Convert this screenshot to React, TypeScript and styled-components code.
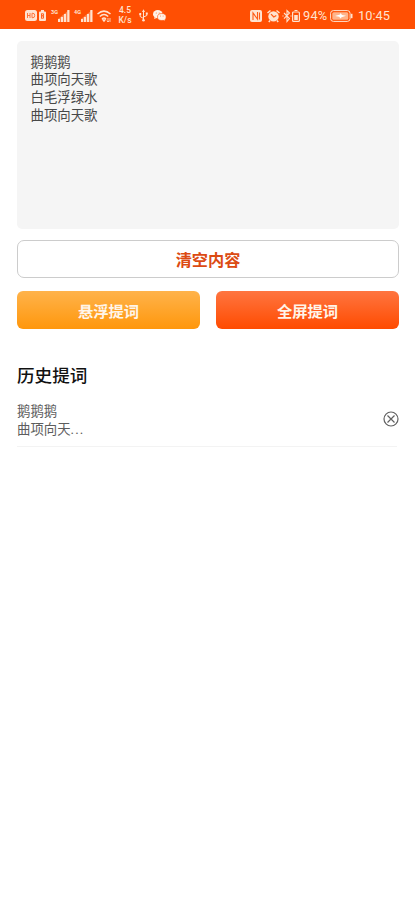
import React from 'react';
import styled, { createGlobalStyle } from 'styled-components';

const GlobalStyle = createGlobalStyle`
  * { box-sizing: border-box; }
  body { margin: 0; background: #fff; font-family: Roboto, "Noto Sans CJK SC", sans-serif; }
  button { font-family: inherit; border: 0; padding: 0; margin: 0; cursor: pointer; }
`;

const Screen = styled.div`
  min-height: 900px;
  background: #fff;
`;

const StatusBar = styled.header`
  display: flex;
  justify-content: space-between;
  height: 29px;
  padding: 2px 25px 0;
  background: #ff4f03;
  color: #ffe3d0;
`;

const StatusGroup = styled.div`
  display: flex;
  align-items: center;
`;

const Glyph = styled.svg<{ $gap?: number }>`
  display: block;
  flex: none;
  margin-left: ${(p) => p.$gap ?? 0}px;
  overflow: visible;
`;

const NetLabel = styled.span<{ $gap: number }>`
  width: 7px;
  margin: 0 0 7px ${(p) => p.$gap}px;
  font-size: 5.5px;
  line-height: 6px;
  font-weight: 700;
`;

const Speed = styled.span`
  width: 20px;
  margin-left: 4px;
  text-align: center;
  font-size: 8.5px;
  line-height: 9.5px;
  font-weight: 500;
`;

const Percent = styled.span`
  width: 27px;
  margin-left: 3px;
  font-size: 12.8px;
  letter-spacing: 0.2px;
`;

const Clock = styled.span`
  width: 32px;
  margin-left: 5px;
  font-size: 12.8px;
  white-space: nowrap;
`;

const Content = styled.main`
  padding: 12px 16px 0 17px;
`;

const ScriptPanel = styled.section`
  height: 188px;
  padding: 12.5px 13.5px;
  border-radius: 5px;
  background: #f5f5f5;
`;

const Verse = styled.p<{ $muted?: boolean }>`
  margin: 0;
  font-size: 13.4px;
  line-height: 17.7px;
  white-space: pre-line;
  color: ${(p) => (p.$muted ? '#5d5d5d' : '#484848')};
`;

const Ellipsis = styled.span`
  letter-spacing: 1.1px;
`;

const ClearButton = styled.button`
  display: block;
  width: 100%;
  height: 38px;
  margin-top: 11px;
  border: 1px solid #ccc;
  border-radius: 7px;
  background: #fff;
  color: #dc4b13;
  font-size: 16.2px;
  font-weight: 700;
`;

const Actions = styled.div`
  display: grid;
  grid-template-columns: 1fr 1fr;
  gap: 16px;
  margin-top: 13px;
`;

const ActionButton = styled.button<{ $from: string; $to: string }>`
  height: 38px;
  border-radius: 6px;
  background: linear-gradient(${(p) => p.$from}, ${(p) => p.$to});
  color: #fff5e9;
  font-size: 15.3px;
  font-weight: 700;
`;

const Heading = styled.h2`
  margin: 34px 0 0;
  font-size: 17.6px;
  line-height: 26px;
  font-weight: 500;
  color: #111;
`;

const HistoryItem = styled.article`
  display: flex;
  justify-content: space-between;
  align-items: flex-start;
  height: 44px;
  margin: 14px 2px 0 0;
  border-bottom: 1px solid #f3f3f3;
`;

const RemoveButton = styled.button`
  margin: 8px -2px 0 0;
  background: none;
`;

const Signal = () => (
  <Glyph $gap={0} width="12" height="12" viewBox="0 0 12 12" fill="currentColor">
    <path d="M0 9h2v3H0zM3 7h2v5H3zM6 4h2v8H6zM9.300 0h2.200v12H9.300z" />
    <path d="M0 12V9L11 0v12z" opacity=".35" />
  </Glyph>
);

export default function App() {
  return (
    <>
      <GlobalStyle />
      <Screen>
        <StatusBar>
          <StatusGroup>
            <Glyph width="12" height="11" viewBox="0 0 12 11">
              <rect width="12" height="11" rx="2.500" fill="currentColor" />
              <path d="M2.500 3v5M5 3v5M2.500 5.500H5M7 3.300v4.400h1q1.700 0 1.700-2.200T8 3.300z" fill="none" stroke="#ff6a2b" strokeWidth=".9" />
            </Glyph>
            <Glyph $gap={2} width="7" height="11" viewBox="0 0 7 11">
              <path d="M2 0h3v1.500h1q1 0 1 1V10q0 1-1 1H1q-1 0-1-1V2.500q0-1 1-1h1z" fill="currentColor" />
              <path d="M2.500 3.500v5M2.500 3.800h2v2h-2h2v2.400h-2" fill="none" stroke="#ff6424" />
            </Glyph>
            <NetLabel $gap={5}>3G</NetLabel>
            <Signal />
            <NetLabel $gap={4}>4G</NetLabel>
            <Signal />
            <Glyph $gap={4} width="14" height="12" viewBox="0 0 14 12" fill="none" stroke="currentColor" strokeWidth="1.500">
              <path d="M.5 4Q7-1.800 13.500 4M2.800 6.500Q7 2.500 11.200 6.500M5 9q2-2 4 0" />
              <path d="M6.200 10h1.600L7 11z" fill="currentColor" />
              <path d="M11 8v4M9.800 10.700 11 12l1.200-1.300M13 12V8" strokeWidth=".8" />
            </Glyph>
            <Speed>4.5<br />K/s</Speed>
            <Glyph $gap={4} width="9" height="13" viewBox="0 0 9 13" fill="none" stroke="currentColor">
              <path d="M4.500 2v9M4.500 9.500 1.200 7.500V5M4.500 8l3.300-1.500V4" />
              <path d="M3 3 4.500.3 6 3z" fill="currentColor" stroke="none" />
              <circle cx="4.500" cy="11.300" r="1.300" fill="currentColor" stroke="none" />
              <path d="M.3 4h1.900v2H.3zM6.800 3.500h1.900v2H6.800z" fill="currentColor" stroke="none" />
            </Glyph>
            <Glyph $gap={5} width="13" height="11" viewBox="0 0 13 11">
              <ellipse cx="4.800" cy="4.200" rx="4.800" ry="4.100" fill="#fff1e7" />
              <path d="m1.500 7-.3 2 2.300-1z" fill="#fff1e7" />
              <ellipse cx="8.800" cy="7" rx="4.300" ry="3.500" fill="#fff1e7" stroke="#ff4f03" strokeWidth=".6" />
              <path d="m10 9.500 1.700 1.300-.2-2z" fill="#fff1e7" />
              <g fill="#ff7a42"><circle cx="3.300" cy="3" r=".6" /><circle cx="6.200" cy="3" r=".6" /><circle cx="7.500" cy="6" r=".5" /><circle cx="10.100" cy="6" r=".5" /></g>
            </Glyph>
          </StatusGroup>
          <StatusGroup>
            <Glyph width="12" height="12" viewBox="0 0 12 12">
              <rect width="12" height="12" rx="2" fill="currentColor" />
              <path d="M3 10V3l4.500 6V2M9.500 2.500v7" fill="none" stroke="#ff5b15" strokeWidth="1.100" />
            </Glyph>
            <Glyph $gap={5} width="13" height="12" viewBox="0 0 13 12">
              <circle cx="6.500" cy="6.400" r="5.200" fill="currentColor" />
              <path d="m.5 3 3-2.500M9.500.5l3 2.500M3 10.500 1.800 12M10 10.500l1.200 1.500" stroke="currentColor" strokeWidth="1.500" />
              <path d="M4 4.200 6.800 7l2.500-1.500" fill="none" stroke="#ff5b15" strokeWidth="1.200" />
            </Glyph>
            <Glyph $gap={3} width="8" height="12" viewBox="0 0 8 12" fill="none" stroke="currentColor" strokeWidth="1.100">
              <path d="m1 3 5.500 5.500L4 11.500V.5L6.500 3 1 8.700" />
              <path d="M0 5.400v1.200M8 5.400v1.200" />
            </Glyph>
            <Glyph $gap={1} width="8" height="12" viewBox="0 0 8 12">
              <path d="M2.500.5h3M1.500 2h5q.9 0 .9.900v7.600q0 .9-.9.900h-5q-.9 0-.9-.9V2.900q0-.9.9-.9z" fill="none" stroke="currentColor" strokeWidth="1.200" />
              <path d="M2.200 5h3.600v5H2.200z" fill="currentColor" />
            </Glyph>
            <Percent>94%</Percent>
            <Glyph width="23" height="12" viewBox="0 0 23 12">
              <rect x=".6" y=".6" width="19.500" height="10.800" rx="2.800" fill="none" stroke="currentColor" />
              <rect x="2.300" y="2.300" width="16" height="7.400" rx="1.500" fill="#ffb48b" />
              <path d="m5 6 5-1.500.5-1.500 1.500 2 4 .7-4.500 1.500-1 1.300-1.300-1.800z" fill="#fff" />
              <path d="M21.700 3.800v4.400" stroke="currentColor" strokeWidth="1.600" />
            </Glyph>
            <Clock>10:45</Clock>
          </StatusGroup>
        </StatusBar>
        <Content>
          <ScriptPanel>
            <Verse>{'鹅鹅鹅\n曲项向天歌\n白毛浮绿水\n曲项向天歌'}</Verse>
          </ScriptPanel>
          <ClearButton>清空内容</ClearButton>
          <Actions>
            <ActionButton $from="#ffb34b" $to="#ff970c">悬浮提词</ActionButton>
            <ActionButton $from="#ff7540" $to="#ff4b00">全屏提词</ActionButton>
          </Actions>
          <Heading>历史提词</Heading>
          <HistoryItem>
            <Verse $muted>{'鹅鹅鹅\n曲项向天'}<Ellipsis>...</Ellipsis></Verse>
            <RemoveButton aria-label="删除">
              <Glyph width="16" height="16" viewBox="0 0 16 16" fill="none" stroke="#606060" strokeWidth="1.200">
                <circle cx="8" cy="8" r="7" />
                <path d="m4.500 4.500 7 7m0-7-7 7" />
              </Glyph>
            </RemoveButton>
          </HistoryItem>
        </Content>
      </Screen>
    </>
  );
}
